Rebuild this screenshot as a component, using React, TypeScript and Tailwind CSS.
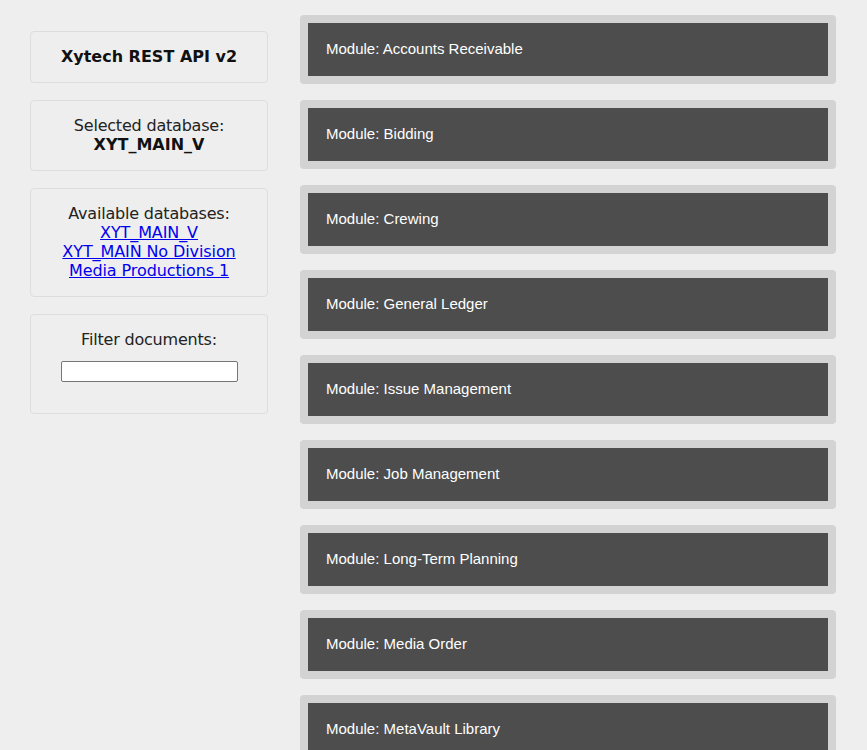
import React from "react";

const modules = [
  "Accounts Receivable",
  "Bidding",
  "Crewing",
  "General Ledger",
  "Issue Management",
  "Job Management",
  "Long-Term Planning",
  "Media Order",
  "MetaVault Library",
  "Purchase Order",
  "Rate Cards",
];

function Panel({ children }: { children: React.ReactNode }) {
  return (
    <div className="rounded-[4px] border border-[#dddddd] bg-[#eeeeee] px-2 py-[15.5px] text-center">
      {children}
    </div>
  );
}

export default function App() {
  return (
    <div className="min-h-[750px] bg-[#eeeeee] pt-[15px]">
      <div className="flex items-start">
        <div
          className="ml-[30px] mt-[15.5px] flex w-[238px] shrink-0 flex-col gap-[17px] text-[16px] leading-[19px] text-[#222222]"
          style={{ fontFamily: '"DejaVu Sans", Verdana, sans-serif' }}
        >
          <Panel>
            <div className="font-bold text-[#111111]">Xytech REST API v2</div>
          </Panel>
          <Panel>
            <div className="tracking-[-0.2px]">Selected database:</div>
            <div className="font-bold text-[#111111]">XYT_MAIN_V</div>
          </Panel>
          <Panel>
            <div className="tracking-[-0.2px]">Available databases:</div>
            <div className="flex flex-col items-center tracking-[-0.1px]">
              <a href="#" className="text-[#0000ee] underline">XYT_MAIN_V</a>
              <a href="#" className="text-[#0000ee] underline">XYT_MAIN No Division</a>
              <a href="#" className="text-[#0000ee] underline">Media Productions 1</a>
            </div>
          </Panel>
          <Panel>
            <div className="tracking-[-0.2px]">Filter documents:</div>
            <div className="mb-[15px] mt-[12px] flex justify-center">
              <input
                type="text"
                className="h-[21px] w-[177px] rounded-[2px] border border-[#767676] bg-white px-1 text-[13px] outline-none"
              />
            </div>
          </Panel>
        </div>
        <div
          className="ml-[32px] flex w-[536px] shrink-0 flex-col gap-[16px]"
          style={{ fontFamily: '"Liberation Sans", Arial, sans-serif' }}
        >
          {modules.map((m) => (
            <div key={m} className="rounded-[4px] bg-[#d3d3d3] p-[8px]">
              <div className="bg-[#4d4d4d] px-[18px] pb-[19px] pt-[17px] text-[15px] leading-[17px] text-white">
                Module: {m}
              </div>
            </div>
          ))}
        </div>
      </div>
    </div>
  );
}
